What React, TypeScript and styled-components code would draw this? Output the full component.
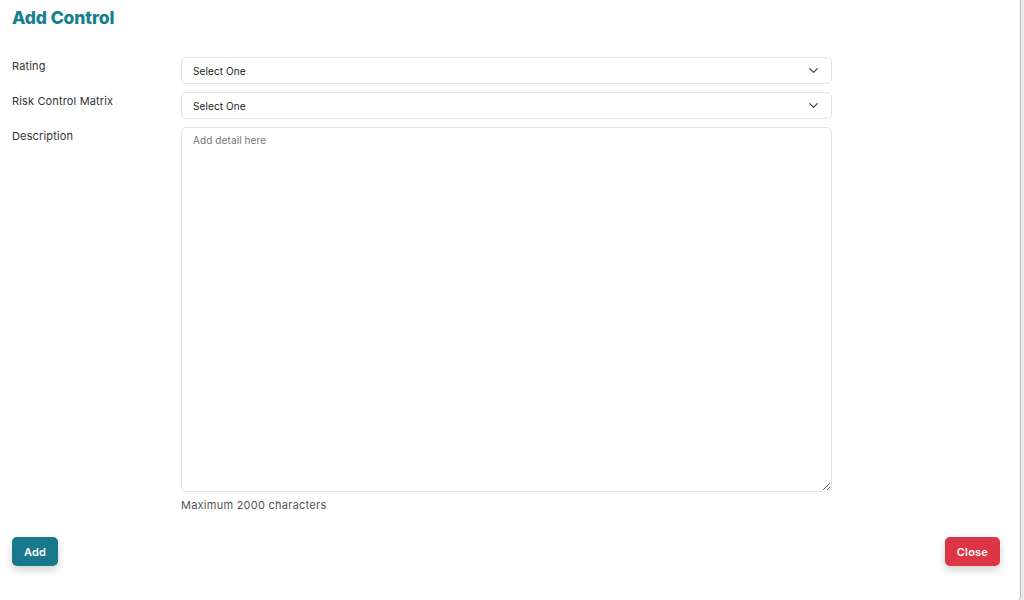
import styled, { createGlobalStyle } from "styled-components";
import { ChevronDown } from "lucide-react";

const Global = createGlobalStyle`
  html, body {
    margin: 0;
    padding: 0;
    background: #e9e9e9;
    font-family: "Inter", "Liberation Sans", sans-serif;
  }
  * { box-sizing: border-box; }
`;

const App = () => {
  return (
    <>
      <Global />
      <Modal>
        <Title>Add Control</Title>
        <Form>
          <Label>Rating</Label>
          <Select>
            <span>Select One</span>
            <ChevronDown size={15} strokeWidth={2} color="#444" />
          </Select>
          <Label>Risk Control Matrix</Label>
          <Select>
            <span>Select One</span>
            <ChevronDown size={15} strokeWidth={2} color="#444" />
          </Select>
          <Label>Description</Label>
          <Field>
            <TextArea placeholder="Add detail here" />
            <Hint>Maximum 2000 characters</Hint>
          </Field>
        </Form>
        <Footer>
          <Button $variant="primary">Add</Button>
          <Button $variant="danger">Close</Button>
        </Footer>
      </Modal>
    </>
  );
};

export default App;

const Modal = styled.div`
  width: 1021px;
  height: 600px;
  background: #fff;
  border-right: 1px solid #b8b8b8;
  border-bottom-right-radius: 4px;
  padding: 8px 20px 0 12px;
  display: flex;
  flex-direction: column;
`;

const Title = styled.h2`
  margin: 0;
  font-size: 17.5px;
  font-weight: 800;
  color: #16808d;
  line-height: 20px;
  letter-spacing: -0.1px;
`;

const Form = styled.div`
  margin-top: 29px;
  display: grid;
  grid-template-columns: 169px 651px;
  row-gap: 8px;
`;

const Label = styled.div`
  font-size: 11px;
  color: #333;
  padding-top: 2px;
  letter-spacing: 0.15px;
`;

const Select = styled.div`
  height: 27px;
  border: 1px solid #e3e3e3;
  border-radius: 5px;
  display: flex;
  align-items: center;
  justify-content: space-between;
  padding: 0 10px 0 11px;
  font-size: 10px;
  color: #222;
  letter-spacing: 0.1px;
`;

const Field = styled.div`
  display: flex;
  flex-direction: column;
`;

const TextArea = styled.textarea`
  height: 365px;
  border: 1px solid #e3e3e3;
  border-radius: 5px;
  padding: 6px 11px;
  font-family: inherit;
  font-size: 10px;
  letter-spacing: 0.1px;
  resize: vertical;
  outline: none;
  &::placeholder {
    color: #777;
  }
`;

const Hint = styled.div`
  margin-top: 6px;
  font-size: 11px;
  color: #555;
  letter-spacing: 0.25px;
`;

const Footer = styled.div`
  margin-top: 25px;
  display: flex;
  justify-content: space-between;
`;

const Button = styled.button<{ $variant: "primary" | "danger" }>`
  height: 29px;
  padding: 0 12px;
  border: none;
  border-radius: 5px;
  font-family: inherit;
  font-size: 11px;
  font-weight: 600;
  letter-spacing: 0.2px;
  color: #fff;
  background: ${(p) => (p.$variant === "primary" ? "#17798a" : "#dc3545")};
  box-shadow: 0 4px 8px rgba(0, 0, 0, 0.18);
`;
